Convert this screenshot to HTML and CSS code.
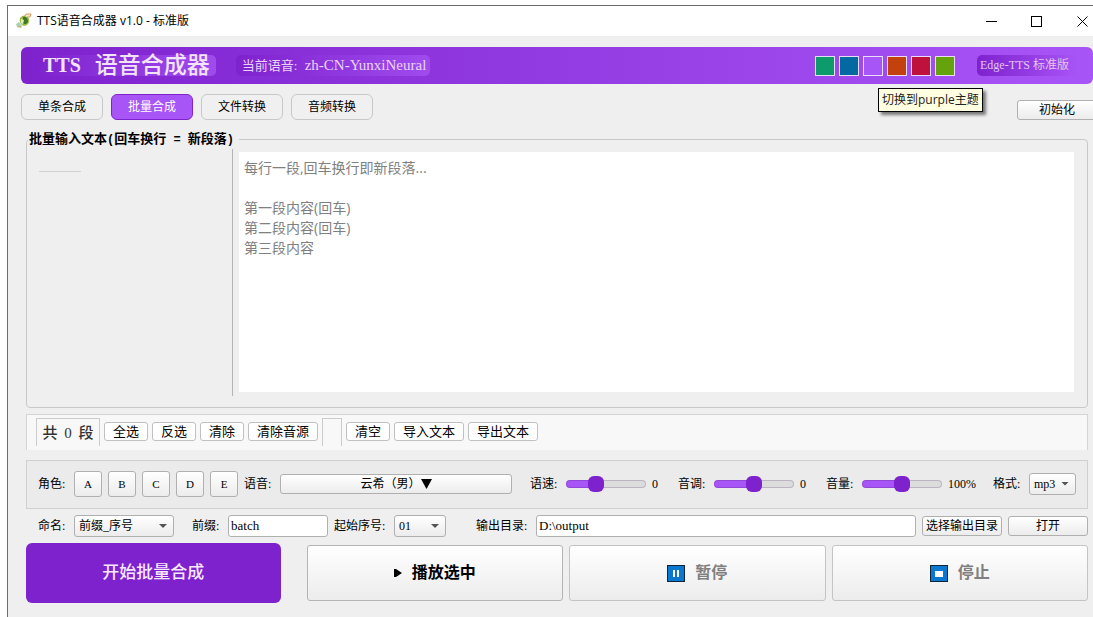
FILE: index.html
```html
<!DOCTYPE html>
<html lang="zh-CN">
<head>
    <meta charset="UTF-8">
    <meta name="viewport" content="width=device-width, initial-scale=1">
    <title>TTS语音合成器 v1.0 - 标准版</title>
    <link rel="stylesheet" href="styles.css">
</head>
<body>
    <div class="window">
        <div class="titlebar">
            <svg class="app-icon" viewBox="0 0 16 16" width="16" height="16">
                <path d="M0 11l3-2 3 4-1 2-4-1z" fill="#a5d3b4"/>
                <path d="M2 13l3 1" stroke="#e0a070"/>
                <path d="M4 5c3-4 8-3 9 1 1 4-2 7-5 7-3-1-5-4-4-8z" fill="#9dbb4a"/>
                <path d="M7 4c3-1 5 1 5 5-1 2-4 3-5 1z" fill="#3c7a28"/>
                <path d="M5 6l3 1-1 4-2-1z" fill="#e6f0b4"/>
                <path d="M9 3l1-2h5l-1 3h-3" fill="#fbe9d4" stroke="#dc9a58"/>
            </svg>
            <span class="caption">TTS语音合成器 v1.0 - 标准版</span>
            <button class="win-btn" aria-label="最小化"><svg width="11" height="11"><path d="M0 5.500h11" stroke="#000"/></svg></button>
            <button class="win-btn" aria-label="最大化"><svg width="11" height="11"><rect x="0.500" y="0.500" width="10" height="10" fill="none" stroke="#000"/></svg></button>
            <button class="win-btn" aria-label="关闭"><svg width="11" height="11"><path d="M0.500 0.500l10 10M10.500 0.500l-10 10" stroke="#000"/></svg></button>
        </div>

        <header class="header">
            <h1 class="title"><span class="title-en">TTS</span><span>语音合成器</span></h1>
            <div class="current">当前语音: <span class="voice-id">zh-CN-YunxiNeural</span></div>
            <div class="themes">
                <button class="swatch green" aria-label="green"></button>
                <button class="swatch blue" aria-label="blue"></button>
                <button class="swatch purple" aria-label="purple"></button>
                <button class="swatch orange" aria-label="orange"></button>
                <button class="swatch red" aria-label="red"></button>
                <button class="swatch lime" aria-label="lime"></button>
                <div class="tooltip" role="tooltip">切换到purple主题</div>
            </div>
            <div class="edition">Edge-TTS 标准版</div>
        </header>

        <nav class="tabs">
            <button class="tab">单条合成</button>
            <button class="tab active">批量合成</button>
            <button class="tab">文件转换</button>
            <button class="tab">音频转换</button>
            <button class="btn init">初始化</button>
        </nav>

        <main class="content">
            <fieldset class="group">
                <legend>批量输入文本<span class="half">(</span>回车换行<span class="half"> = </span>新段落<span class="half">)</span></legend>
                <div class="split">
                    <div class="segments"><div class="segment-line"></div></div>
                    <textarea class="editor" aria-label="批量输入文本" placeholder="每行一段,回车换行即新段落...

第一段内容(回车)
第二段内容(回车)
第三段内容"></textarea>
                </div>
            </fieldset>

            <div class="toolbar">
                <div class="count">共 <span class="num">0</span> 段</div>
                <button class="tool">全选</button>
                <button class="tool">反选</button>
                <button class="tool">清除</button>
                <button class="tool wide">清除音源</button>
                <div class="spacer"></div>
                <button class="tool">清空</button>
                <button class="tool wide">导入文本</button>
                <button class="tool wide">导出文本</button>
            </div>

            <div class="panel">
                <span class="label">角色:</span>
                <button class="btn role">A</button>
                <button class="btn role">B</button>
                <button class="btn role">C</button>
                <button class="btn role">D</button>
                <button class="btn role">E</button>
                <span class="label">语音:</span>
                <button class="btn voice">云希（男）<svg width="11" height="10"><path d="M0 0h11L5.500 10z"/></svg></button>
                <label class="label gap-left" for="rate">语速:</label>
                <input class="slider" id="rate" type="range" value="34" style="--fill: 37%">
                <output class="value" for="rate">0</output>
                <label class="label" for="pitch">音调:</label>
                <input class="slider" id="pitch" type="range" value="50" style="--fill: 50%">
                <output class="value" for="pitch">0</output>
                <label class="label" for="volume">音量:</label>
                <input class="slider" id="volume" type="range" value="50" style="--fill: 50%">
                <output class="value percent" for="volume">100%</output>
                <label class="label" for="format">格式:</label>
                <span class="select format"><select id="format"><option>mp3</option><option>wav</option></select></span>
            </div>

            <div class="naming">
                <label class="label" for="rule">命名:</label>
                <span class="select rule"><select id="rule"><option>前缀_序号</option></select></span>
                <label class="label gap-left" for="prefix">前缀:</label>
                <input class="field prefix" id="prefix" type="text" value="batch">
                <label class="label long" for="start">起始序号:</label>
                <span class="select start"><select id="start"><option>01</option></select></span>
                <label class="label long gap-left-big" for="output">输出目录:</label>
                <input class="field output" id="output" type="text" value="D:\output">
                <button class="btn small">选择输出目录</button>
                <button class="btn small">打开</button>
            </div>

            <div class="actions">
                <button class="action primary">开始批量合成</button>
                <button class="action">
                    <svg width="8" height="8"><path d="M0 0h2l6 4-6 4H0z"/></svg>播放选中
                </button>
                <button class="action" disabled>
                    <svg width="18" height="17"><rect x="0.500" y="0.500" width="17" height="16" fill="#0b78d0" stroke="#10243c"/><path d="M7 5v7M11 5v7" stroke="#fff" stroke-width="2"/></svg>暂停
                </button>
                <button class="action" disabled>
                    <svg width="18" height="17"><rect x="0.500" y="0.500" width="17" height="16" fill="#0b78d0" stroke="#10243c"/><rect x="5" y="6" width="8" height="6" fill="#fff"/></svg>停止
                </button>
            </div>
        </main>
    </div>
</body>
</html>
```
FILE: styles.css
```css
* { box-sizing: border-box; }
body {
    margin: 0;
    height: 100vh;
    padding: 5px 0 0 7px;
    overflow: hidden;
    background: #fff;
    color: #000;
    font: 12px/16px "Liberation Serif", "Noto Sans CJK SC", sans-serif;
}
button, input, select, textarea { font: inherit; color: inherit; margin: 0; padding: 0; }
svg { display: block; flex: none; }

.window {
    display: flex;
    flex-direction: column;
    height: 100%;
    border: solid #6c6c74;
    border-width: 1px 0 0 1px;
    background: #efefef;
}

/* title bar */
.titlebar {
    display: flex;
    align-items: center;
    height: 30px;
    padding-left: 8px;
    background: #fff;
    font-family: "Open Sans", "Noto Sans CJK SC", sans-serif;
}
.caption { flex: 1; padding-left: 5px; }
.win-btn {
    display: flex;
    justify-content: center;
    align-items: center;
    width: 45px;
    height: 30px;
    border: 0;
    background: none;
}
.win-btn:last-child { width: 46px; margin-right: -12px; }

/* header */
.header {
    display: flex;
    align-items: center;
    flex: none;
    height: 37px;
    margin: 11px 0 0 13px;
    padding: 0 14px;
    border-radius: 6px;
    background: linear-gradient(90deg, #7e22ce, #a855f7);
    color: #f3e3fb;
}
.title, .current, .edition {
    height: 21px;
    border-radius: 5px;
    background: linear-gradient(90deg, #7e22ce, #a04bee);
    line-height: 21px;
    white-space: nowrap;
}
.title {
    display: flex;
    gap: 14px;
    margin: 0;
    padding: 0 6px 0 8px;
    font-size: 23px;
    font-weight: 500;
}
.title-en { font-size: 20px; font-weight: 700; }
.current {
    margin-left: 20px;
    padding: 0 4px 0 6px;
    font-size: 13px;
    color: #ecd3f6;
}
.voice-id { padding-left: 4px; font-size: 15px; }
.themes { position: relative; display: flex; gap: 4px; margin-left: auto; }
.swatch { width: 20px; height: 20px; border: 1px solid #eadcf8; }
.green { background: #0d9b6c; }
.blue { background: #0369a1; }
.purple { background: #a855f7; }
.orange { background: #c2410c; }
.red { background: #be123c; }
.lime { background: #65a30d; }
.tooltip {
    position: absolute;
    left: 63px;
    top: 32px;
    padding: 3px;
    border: 1px solid #000;
    background: #ffffe1;
    box-shadow: 3px 3px 3px rgba(0, 0, 0, 0.5);
    color: #222;
    font-family: "Open Sans", "Noto Sans CJK SC", sans-serif;
    white-space: nowrap;
}
.edition {
    width: 102px;
    margin-left: 22px;
    padding-left: 3px;
    background: linear-gradient(90deg, #7e22ce, #a855f7);
    color: #e6c4ee;
}

/* tabs */
.tabs { display: flex; gap: 8px; flex: none; margin: 10px 0 0 13px; }
.tab {
    width: 82px;
    height: 26px;
    border: 1px solid #c8c8c8;
    border-radius: 6px;
    background: #f0f0f0;
}
.tab.active { border-color: #7e22ce; background: #a855f7; color: #fff; }
.btn {
    height: 20px;
    border: 1px solid #b0b0b0;
    border-radius: 3px;
    background: linear-gradient(#fff, #ececec);
    white-space: nowrap;
}
.init { width: 80px; margin: 6px -4px 0 auto; }

/* main area */
.content {
    display: flex;
    flex-direction: column;
    flex: 1;
    min-height: 0;
    padding: 10px 5px 14px 18px;
}
.group {
    display: flex;
    flex: 1;
    min-height: 0;
    min-width: 0;
    margin: 0;
    padding: 0 13px 11px 0;
    border: 1px solid #c8c8c8;
    border-radius: 4px;
}
legend {
    margin-left: 1px;
    padding: 0 5px 0 1px;
    font-size: 13px;
    line-height: 18px;
    font-weight: 700;
    white-space: pre;
}
.half { font-family: "Liberation Mono", monospace; font-size: 12px; }
.split { display: flex; flex: 1; height: 100%; }
.segments { width: 206px; border-right: 1px solid #b4b4b4; padding: 22px 12px; }
.segment-line { width: 42px; height: 1px; background: #d0d0d0; }
.editor {
    flex: 1;
    margin: 3px 0 4px 6px;
    padding: 6px 5px;
    border: 0;
    resize: none;
    background: #fff;
    font: 14px/20px "Open Sans", "Noto Sans CJK SC", sans-serif;
}
.editor::placeholder { color: #808080; }

.toolbar {
    display: flex;
    align-items: center;
    gap: 4px;
    flex: none;
    height: 36px;
    margin-top: 6px;
    padding: 0 9px 2px;
    border: 1px solid #d4d4d4;
    border-bottom: 0;
    background: #f8f8f8;
}
.count, .spacer { height: 28px; border: 1px solid #ccc; border-bottom: 0; }
.count {
    width: 64px;
    font-size: 15px;
    line-height: 28px;
    font-weight: 500;
    text-align: center;
    color: #333;
    white-space: nowrap;
}
.num { padding: 0 3px; }
.spacer { width: 20px; }
.tool {
    width: 44px;
    height: 19px;
    border: 1px solid #c0c0c0;
    border-radius: 3px;
    background: #fff;
    font-size: 13px;
    line-height: 17px;
}
.tool.wide { width: 70px; }

.panel, .naming { display: flex; align-items: center; gap: 6px; flex: none; }
.panel {
    height: 49px;
    margin-top: 10px;
    padding: 0 11px 2px;
    border: 1px solid #d0d0d0;
    background: #ebebeb;
}
.label { width: 30px; white-space: nowrap; }
.label.long { width: 54px; }
.gap-left { margin-left: 12px; }
.gap-left-big { margin-left: 24px; }
.role { width: 28px; height: 26px; font-size: 11px; }
.voice { display: flex; flex: 1; justify-content: center; align-items: center; }
.slider {
    width: 80px;
    height: 16px;
    appearance: none;
    background: none;
}
.slider::-webkit-slider-runnable-track {
    height: 8px;
    border-radius: 4px;
    background: linear-gradient(90deg, #a855f7 var(--fill), #dcdcdc var(--fill));
    box-shadow: inset 0 0 0 1px rgba(60, 20, 90, 0.2);
}
.slider::-webkit-slider-thumb {
    appearance: none;
    width: 16px;
    height: 16px;
    margin-top: -4px;
    border-radius: 6px;
    background: #7e22ce;
}
.value { width: 20px; }
.value.percent { width: 39px; }

.select { position: relative; height: 22px; }
.select select {
    width: 100%;
    height: 22px;
    padding-left: 4px;
    appearance: none;
    border: 1px solid #b0b0b0;
    border-radius: 3px;
    background: linear-gradient(#fff, #ececec);
}
.select::after {
    content: "";
    position: absolute;
    right: 7px;
    top: 9px;
    width: 8px;
    height: 4px;
    background: #555;
    clip-path: polygon(0 0, 100% 0, 50% 100%);
    pointer-events: none;
}
.format { width: 47px; }
.rule { width: 100px; }
.start { width: 52px; }

.naming { margin-top: 6px; padding-left: 12px; }
.field {
    height: 22px;
    padding: 0 2px;
    border: 1px solid #b0b0b0;
    border-radius: 3px;
    background: #fff;
    font-size: 13px;
}
.prefix { width: 100px; }
.output { flex: 1; min-width: 80px; }
.small { width: 80px; }

.actions { display: flex; align-items: center; gap: 6px; flex: none; margin-top: 6px; }
.action {
    display: flex;
    flex: 1;
    justify-content: center;
    align-items: center;
    gap: 10px;
    height: 56px;
    border: 1px solid #b4b4b4;
    border-radius: 3px;
    background: linear-gradient(#fff, #ececec);
    font-size: 16px;
    font-weight: 700;
}
.action:disabled { border-color: #c4c4c4; color: #808080; }
.action.primary {
    height: 60px;
    margin-right: 20px;
    border: 0;
    border-radius: 6px;
    background: #7e22ce;
    color: #f7e8ff;
    font-size: 17px;
    font-weight: 500;
}
```
